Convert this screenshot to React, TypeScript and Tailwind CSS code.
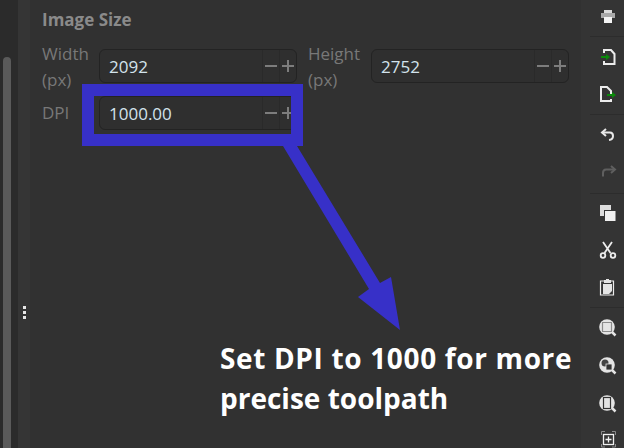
function Stepper({ value, className = "" }: { value: string; className?: string }) {
  return (
    <div className={`flex h-[34px] w-[198px] shrink-0 items-stretch rounded-[6px] border border-[#232323] bg-[#2f2f2f] ${className}`}>
      <div className="flex-1 pl-[9px] text-[17px] leading-[33px] text-[#d3e3ec]">{value}</div>
      <div className="flex w-[17px] items-center justify-center border-l border-[#2a2a2a]">
        <div className="h-[2px] w-[12px] bg-[#7d7d7d]" />
      </div>
      <div className="relative flex w-[17px] items-center justify-center border-l border-[#2a2a2a]">
        <div className="h-[2px] w-[12px] bg-[#7d7d7d]" />
        <div className="absolute h-[12px] w-[2px] bg-[#7d7d7d]" />
      </div>
    </div>
  );
}

function Icon({ children }: { children: React.ReactNode }) {
  return (
    <svg width="24" height="24" viewBox="0 0 24 24" className="block shrink-0">
      {children}
    </svg>
  );
}

function Row({ h, children }: { h: string; children: React.ReactNode }) {
  return <div className={`flex shrink-0 items-center justify-center ${h}`}>{children}</div>;
}

function Sep() {
  return <div className="h-px w-full shrink-0 bg-[#2c2c2c]" />;
}

function Magnifier({ children }: { children: React.ReactNode }) {
  return (
    <Icon>
      <circle cx="12" cy="12" r="7.800" fill="#e4e4e4" />
      <path d="M17 17l3.500 3.500" stroke="#e4e4e4" strokeWidth="2.500" />
      {children}
    </Icon>
  );
}

export default function App() {
  return (
    <div
      className="relative flex h-[448px] w-[624px] overflow-hidden bg-[#313131]"
      style={{ fontFamily: '"Open Sans", "Noto Sans", sans-serif' }}
    >
      {/* left scroll strip */}
      <div className="flex w-[18px] shrink-0 bg-[#2b2b2b]">
        <div className="ml-[3px] mt-[57px] h-full w-[8px] rounded-t-[4px] bg-[#5a5a5a]" />
      </div>
      {/* splitter */}
      <div className="flex w-[12px] shrink-0 flex-col items-center justify-center gap-[2px] bg-[#353535] pt-[176px]">
        <div className="h-[3px] w-[3px] bg-[#e8e8e8]" />
        <div className="h-[3px] w-[3px] bg-[#e8e8e8]" />
        <div className="h-[3px] w-[3px] bg-[#e8e8e8]" />
      </div>

      {/* panel */}
      <div className="flex-1 pl-[12px] pt-[8px]">
        <div className="text-[17px] font-bold leading-[24px] text-[#8a8a8a]">Image Size</div>
        <div className="mt-[9px] flex">
          <div className="w-[57px] shrink-0 text-[17px] leading-[26px] text-[#787878]">
            Width
            <br />
            (px)
          </div>
          <Stepper value="2092" className="mt-[8px]" />
          <div className="ml-[11px] w-[63px] shrink-0 text-[17px] leading-[26px] text-[#787878]">
            Height
            <br />
            (px)
          </div>
          <Stepper value="2752" className="mt-[8px]" />
        </div>
        <div className="mt-[3px] flex">
          <div className="w-[57px] shrink-0 text-[17px] leading-[34px] text-[#787878]">DPI</div>
          <Stepper value="1000.00" />
        </div>
      </div>

      {/* right toolbar */}
      <div className="flex h-[448px] w-[43px] shrink-0 flex-col overflow-hidden bg-[#343434] pl-[9px]">
        <Row h="h-[36px] pb-[3px]">
          <Icon>
            <rect x="9" y="5" width="8" height="3" fill="#dcdcdc" />
            <rect x="6" y="8" width="14" height="5" fill="#a9a9a9" />
            <rect x="9" y="12" width="8" height="6" fill="#f4f4f4" />
          </Icon>
        </Row>
        <Sep />
        <div className="h-[1px] shrink-0" />
        <Row h="h-[38px]">
          <Icon>
            <path d="M9 8V5h7l3.500 4v10H9v-3" fill="none" stroke="#ececec" strokeWidth="2" />
            <rect x="6" y="11" width="6" height="2" fill="#0a8a0a" />
            <path d="M11 9l4 3-4 3z" fill="#0a8a0a" />
          </Icon>
        </Row>
        <Row h="h-[38px]">
          <Icon>
            <path d="M16 11V8l-4-4H6v14h10v-2" fill="none" stroke="#ececec" strokeWidth="2" />
            <rect x="12" y="11" width="6" height="2" fill="#0a8a0a" />
            <path d="M17 9l4 3-4 3z" fill="#0a8a0a" />
          </Icon>
        </Row>
        <Sep />
        <Row h="h-[38px]">
          <Icon>
            <path d="M11 7l-4 3.500 4 3.500" fill="none" stroke="#e8e8e8" strokeWidth="2" />
            <path d="M7 10.500h8q3 0 3 3.500t-4 4" fill="none" stroke="#e8e8e8" strokeWidth="2" />
          </Icon>
        </Row>
        <Row h="h-[38px]">
          <Icon>
            <path d="M16 6l4 3.500-4 3.500" fill="none" stroke="#5f5f5f" strokeWidth="2" />
            <path d="M20 9.500h-9q-3 0-3 3.500v3.500" fill="none" stroke="#5f5f5f" strokeWidth="2" />
          </Icon>
        </Row>
        <div className="h-[2px] shrink-0" />
        <Sep />
        <Row h="h-[37px]">
          <Icon>
            <rect x="5" y="4" width="11" height="11" fill="#dcdcdc" />
            <rect x="9.500" y="9.500" width="11.500" height="11" fill="#f0f0f0" stroke="#343434" strokeWidth="1" />
          </Icon>
        </Row>
        <Row h="h-[37px]">
          <Icon>
            <path d="M8 4l7.500 11M17 4L9.500 15" stroke="#ececec" strokeWidth="1.800" />
            <circle cx="8" cy="17.500" r="2.300" fill="none" stroke="#ececec" strokeWidth="1.800" />
            <circle cx="18" cy="17.500" r="2.300" fill="none" stroke="#ececec" strokeWidth="1.800" />
          </Icon>
        </Row>
        <Row h="h-[37px]">
          <Icon>
            <path d="M9 6H5.500v14h13V6H15" fill="none" stroke="#ececec" strokeWidth="1.200" />
            <path d="M9 8V5h2V4h3v1h2v3zM8 9h9v7l-3 3H8z" fill="#e4e4e4" />
          </Icon>
        </Row>
        <div className="h-[2px] shrink-0" />
        <Sep />
        <Row h="h-[38px]">
          <Magnifier>
            <rect x="7.500" y="7.500" width="9" height="9" fill="none" stroke="#333" strokeWidth="1.200" strokeDasharray="1 1" />
          </Magnifier>
        </Row>
        <Row h="h-[38px]">
          <Magnifier>
            <circle cx="10" cy="10" r="3.500" fill="#444" />
            <rect x="11" y="11" width="6" height="6" fill="#333" stroke="#e4e4e4" strokeWidth="0.800" />
          </Magnifier>
        </Row>
        <Row h="h-[38px]">
          <Magnifier>
            <rect x="8.500" y="6.500" width="7" height="11" fill="#e4e4e4" stroke="#333" strokeWidth="1.200" />
          </Magnifier>
        </Row>
        <Row h="h-[30px]">
          <Icon>
            <rect x="8.500" y="9.500" width="10" height="10" fill="none" stroke="#f0f0f0" strokeWidth="1.300" />
            <path d="M13.500 11.500v6M10.500 14.500h6" stroke="#f0f0f0" strokeWidth="1.300" />
            <path d="M6.500 10V6.500H10M17 6.500h3.500V10M6.500 19v3H10M20.500 19v3H17" fill="none" stroke="#8a8a8a" strokeWidth="1" />
          </Icon>
        </Row>
      </div>

      {/* annotation overlay */}
      <svg width="624" height="448" viewBox="0 0 624 448" className="pointer-events-none absolute left-0 top-0">
        <path fillRule="evenodd" d="M82 84H303V146H82ZM94 96V134H291V96Z" fill="#3730c8" />
        <path d="M283 146H297L380 283L391 277L400 330L358 297L369 289Z" fill="#3730c8" />
      </svg>
      <div className="absolute left-[220px] top-[338px] w-[390px] text-[28px] font-bold leading-[40px] text-white">
        <div className="tracking-[0.65px]">Set DPI to 1000 for more</div>
        <div>precise toolpath</div>
      </div>
    </div>
  );
}
